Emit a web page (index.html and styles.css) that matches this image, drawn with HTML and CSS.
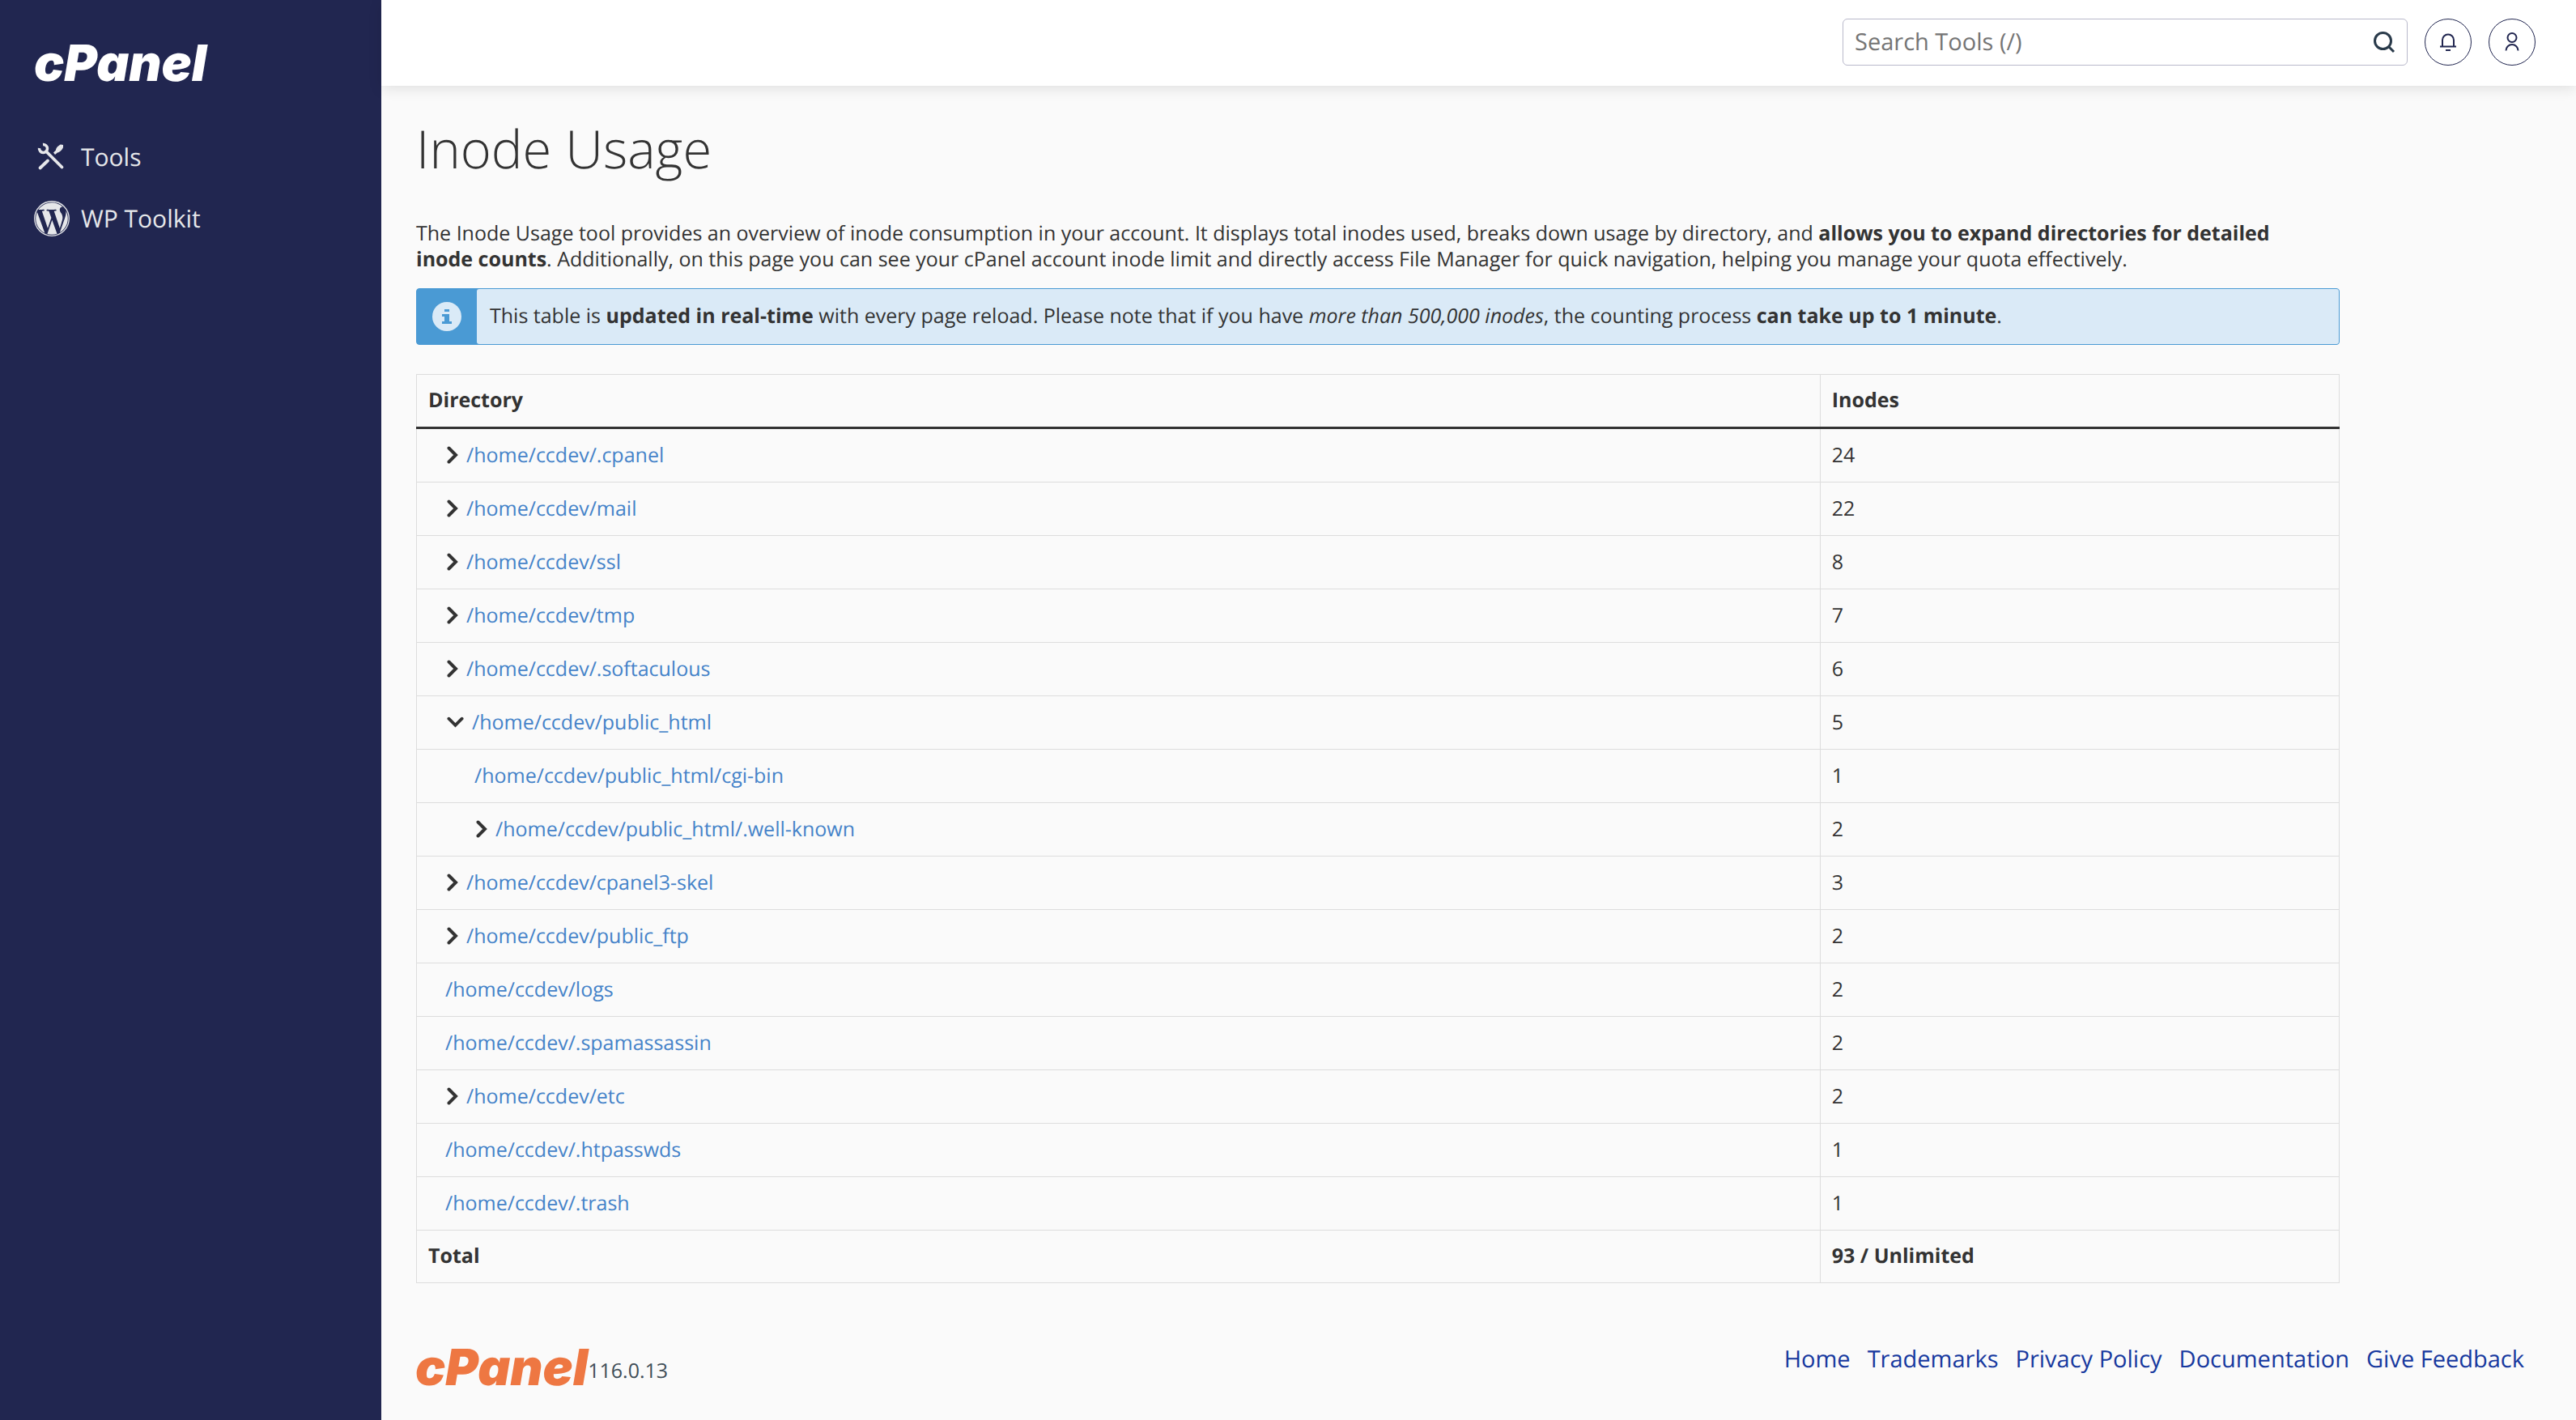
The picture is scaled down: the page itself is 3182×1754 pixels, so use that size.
FILE: index.html
```html
<!DOCTYPE html>
<html lang="en">
<head>
<meta charset="utf-8">
<title>cPanel - Inode Usage</title>
<link rel="stylesheet" href="styles.css">
</head>
<body>
<svg class="sprite" aria-hidden="true">
  <symbol id="chevron-right" viewBox="0 0 14 22"><path d="M2.5 2.5 11 11l-8.500 8.500" fill="none" stroke="currentColor" stroke-width="4" stroke-linecap="round" stroke-linejoin="miter"/></symbol>
  <symbol id="chevron-down" viewBox="0 0 22 14"><path d="M2.500 2.500 11 11l8.500-8.500" fill="none" stroke="currentColor" stroke-width="4" stroke-linecap="round" stroke-linejoin="miter"/></symbol>
</svg>

<aside class="sidebar">
  <a class="logo" href="#">cPanel</a>
  <nav class="side-nav" aria-label="Main">
    <a class="side-link" href="#">
      <svg class="side-icon" viewBox="0 0 44 44" aria-hidden="true">
        <path d="M11 6.500a5 5 0 1 1-4.500 4.500" fill="none" stroke="currentColor" stroke-width="3.500"/>
        <path d="M15 15 34.500 34.500M17 26.500 7.500 35.500" fill="none" stroke="currentColor" stroke-width="3.800" stroke-linecap="round"/>
        <path d="M24 16.500l3-3c0-3 4-6.500 6-7l3 .500v3c-.500 2-3.500 6-7 6.500l-3 2.500z" fill="currentColor"/>
      </svg>
      <span>Tools</span>
    </a>
    <a class="side-link" href="#">
      <svg class="side-icon" viewBox="0 0 24 24" aria-hidden="true"><circle cx="12" cy="12" r="11.600" fill="none" stroke="currentColor" stroke-width=".7"/><path fill="currentColor" d="M21.469 6.825c.84 1.537 1.318 3.300 1.318 5.175 0 3.979-2.156 7.456-5.363 9.325l3.295-9.527c.615-1.540.82-2.771.82-3.864 0-.405-.026-.780-.070-1.110m-7.981.105c.647-.030 1.232-.105 1.232-.105.582-.075.514-.930-.067-.899 0 0-1.755.135-2.880.135-1.064 0-2.850-.150-2.850-.150-.585-.030-.661.855-.075.885 0 0 .540.061 1.125.090l1.680 4.605-2.370 7.080L5.354 6.900c.649-.030 1.234-.100 1.234-.100.585-.075.516-.930-.065-.896 0 0-1.746.138-2.874.138-.200 0-.438-.008-.690-.015C4.911 3.150 8.235 1.215 12 1.215c2.809 0 5.365 1.072 7.286 2.833-.046-.003-.091-.009-.141-.009-1.060 0-1.812.923-1.812 1.914 0 .890.513 1.643 1.060 2.531.411.720.890 1.643.890 2.977 0 .915-.354 1.994-.821 3.479l-1.075 3.585-3.900-11.610.001.014zM12 22.784c-1.059 0-2.081-.153-3.048-.437l3.237-9.406 3.315 9.087c.024.053.050.101.078.149-1.120.393-2.325.609-3.582.609M1.211 12c0-1.564.336-3.050.935-4.390L7.290 21.709C3.694 19.960 1.212 16.271 1.211 12"/></svg>
      <span>WP Toolkit</span>
    </a>
  </nav>
</aside>

<div class="page">
  <header class="topbar">
    <form class="search" role="search">
      <input class="search-input" type="search" placeholder="Search Tools (/)" aria-label="Search Tools">
      <button class="search-button" type="button" aria-label="Search">
        <svg class="search-icon" viewBox="0 0 28 28" aria-hidden="true"><circle cx="12.500" cy="12.500" r="10" fill="none" stroke="currentColor" stroke-width="3"/><path d="M19.500 19.500 26 26" stroke="currentColor" stroke-width="3"/></svg>
      </button>
    </form>
    <button class="round-button" type="button" aria-label="Notifications">
      <svg class="round-icon" viewBox="0 0 24 24" aria-hidden="true"><path d="M2 17.500h20M5 17.500V9.500a7 7 0 0 1 14 0v8M9 22h6" fill="none" stroke="currentColor" stroke-width="2"/></svg>
    </button>
    <button class="round-button" type="button" aria-label="Account">
      <svg class="round-icon" viewBox="0 0 24 24" aria-hidden="true"><circle cx="12" cy="6.500" r="5.500" fill="none" stroke="currentColor" stroke-width="2"/><path d="M4.500 22.500a7.500 7.500 0 0 1 15 0" fill="none" stroke="currentColor" stroke-width="2"/></svg>
    </button>
  </header>

  <main class="content">
    <h1 class="title">Inode Usage</h1>
    <p class="intro">The Inode Usage tool provides an overview of inode consumption in your account. It displays total inodes used, breaks down usage by directory, and <b>allows you to expand directories for detailed inode counts</b>. Additionally, on this page you can see your cPanel account inode limit and directly access File Manager for quick navigation, helping you manage your quota effectively.</p>
    <div class="notice">
      <div class="notice-badge">
        <svg class="notice-icon" viewBox="0 0 36 36" aria-hidden="true"><circle cx="18" cy="18" r="18" fill="#daeaf7"/><path d="M15 9h6v3h-6zM12 15h9v9h3v3H12v-3h3v-6h-3z" fill="#4a9ad4"/></svg>
      </div>
      <p class="notice-text">This table is <b>updated in real-time</b> with every page reload. Please note that if you have <i>more than 500,000 inodes</i>, the counting process <b>can take up to 1 minute</b>.</p>
    </div>

    <table class="inodes">
      <thead>
        <tr><th class="col-dir" scope="col">Directory</th><th scope="col">Inodes</th></tr>
      </thead>
      <tbody>
        <tr><td><div class="entry"><button class="toggle" type="button" aria-label="Expand"><svg class="chev-right" aria-hidden="true"><use href="#chevron-right"/></svg></button><a href="#">/home/ccdev/.cpanel</a></div></td><td>24</td></tr>
        <tr><td><div class="entry"><button class="toggle" type="button" aria-label="Expand"><svg class="chev-right" aria-hidden="true"><use href="#chevron-right"/></svg></button><a href="#">/home/ccdev/mail</a></div></td><td>22</td></tr>
        <tr><td><div class="entry"><button class="toggle" type="button" aria-label="Expand"><svg class="chev-right" aria-hidden="true"><use href="#chevron-right"/></svg></button><a href="#">/home/ccdev/ssl</a></div></td><td>8</td></tr>
        <tr><td><div class="entry"><button class="toggle" type="button" aria-label="Expand"><svg class="chev-right" aria-hidden="true"><use href="#chevron-right"/></svg></button><a href="#">/home/ccdev/tmp</a></div></td><td>7</td></tr>
        <tr><td><div class="entry"><button class="toggle" type="button" aria-label="Expand"><svg class="chev-right" aria-hidden="true"><use href="#chevron-right"/></svg></button><a href="#">/home/ccdev/.softaculous</a></div></td><td>6</td></tr>
        <tr><td><div class="entry"><button class="toggle" type="button" aria-label="Collapse"><svg class="chev-down" aria-hidden="true"><use href="#chevron-down"/></svg></button><a href="#">/home/ccdev/public_html</a></div></td><td>5</td></tr>
        <tr><td><div class="entry nested"><a href="#">/home/ccdev/public_html/cgi-bin</a></div></td><td>1</td></tr>
        <tr><td><div class="entry nested"><button class="toggle" type="button" aria-label="Expand"><svg class="chev-right" aria-hidden="true"><use href="#chevron-right"/></svg></button><a href="#">/home/ccdev/public_html/.well-known</a></div></td><td>2</td></tr>
        <tr><td><div class="entry"><button class="toggle" type="button" aria-label="Expand"><svg class="chev-right" aria-hidden="true"><use href="#chevron-right"/></svg></button><a href="#">/home/ccdev/cpanel3-skel</a></div></td><td>3</td></tr>
        <tr><td><div class="entry"><button class="toggle" type="button" aria-label="Expand"><svg class="chev-right" aria-hidden="true"><use href="#chevron-right"/></svg></button><a href="#">/home/ccdev/public_ftp</a></div></td><td>2</td></tr>
        <tr><td><div class="entry"><a href="#">/home/ccdev/logs</a></div></td><td>2</td></tr>
        <tr><td><div class="entry"><a href="#">/home/ccdev/.spamassassin</a></div></td><td>2</td></tr>
        <tr><td><div class="entry"><button class="toggle" type="button" aria-label="Expand"><svg class="chev-right" aria-hidden="true"><use href="#chevron-right"/></svg></button><a href="#">/home/ccdev/etc</a></div></td><td>2</td></tr>
        <tr><td><div class="entry"><a href="#">/home/ccdev/.htpasswds</a></div></td><td>1</td></tr>
        <tr><td><div class="entry"><a href="#">/home/ccdev/.trash</a></div></td><td>1</td></tr>
      </tbody>
      <tfoot>
        <tr><th scope="row">Total</th><td>93 / Unlimited</td></tr>
      </tfoot>
    </table>
  </main>

  <footer class="footer">
    <div class="brand"><a class="logo logo-orange" href="#">cPanel</a><span class="version">116.0.13</span></div>
    <nav class="footer-nav" aria-label="Footer">
      <a href="#">Home</a><a href="#">Trademarks</a><a href="#">Privacy Policy</a><a href="#">Documentation</a><a href="#">Give Feedback</a>
    </nav>
  </footer>
</div>
</body>
</html>
```

FILE: styles.css
```css
* { box-sizing: border-box; }

body {
  margin: 0;
  min-height: 100vh;
  display: flex;
  background: #fafafa;
  color: #333;
  font: 25px/32px "Open Sans", sans-serif;
  text-rendering: geometricPrecision;
}

a { text-decoration: none; }
button { margin: 0; padding: 0; border: 0; background: none; color: inherit; font: inherit; }
.sprite { display: none; }

.logo {
  color: #fff;
  font: italic 900 62px/60px "Inter", sans-serif;
}
.logo-orange { color: #ee7742; }

.sidebar {
  flex: 0 0 471px;
  padding: 48px 42px;
  background: #212650;
}
.side-nav { display: flex; flex-direction: column; gap: 32px; margin-top: 64px; }
.side-link {
  display: flex;
  align-items: center;
  gap: 14px;
  color: #e6e7ea;
  font-size: 30px;
  line-height: 44px;
}
.side-icon { width: 44px; height: 44px; }

.page { flex: 1; min-width: 0; display: flex; flex-direction: column; }

.topbar {
  display: flex;
  justify-content: flex-end;
  gap: 21px;
  padding: 23px 50px 25px;
  background: #fff;
  box-shadow: 0 4px 16px rgba(0, 0, 0, 0.1);
}
.search {
  display: flex;
  flex: 0 1 698px;
  height: 58px;
  border: 1px solid #b9b9cb;
  border-radius: 6px;
}
.search-input {
  flex: 1;
  min-width: 0;
  padding: 0 14px;
  border: 0;
  background: none;
  font: 29px/40px "Open Sans", sans-serif;
  text-rendering: inherit;
}
.search-input::placeholder { color: #757575; }
.search-button { width: 56px; color: #293a4a; }
.search-icon { display: block; width: 28px; height: 28px; margin: 0 auto; }
.round-button {
  display: flex;
  align-items: center;
  justify-content: center;
  width: 58px;
  height: 58px;
  border: 1px solid #212650;
  border-radius: 50%;
  color: #212650;
}
.round-icon { width: 24px; height: 24px; }

.content { padding: 34px 292px 0 43px; }
.title { margin: 0 0 44px; font-size: 65px; line-height: 88px; font-weight: 300; }
.intro { margin: 0 0 20px; padding-right: 24px; }

.notice {
  display: flex;
  margin-bottom: 36px;
  border: 1px solid #4a9ad4;
  border-radius: 4px;
  background: #4a9ad4;
}
.notice-badge { display: flex; align-items: center; justify-content: center; width: 74px; }
.notice-icon { width: 36px; height: 36px; }
.notice-text { flex: 1; margin: 0; padding: 17px 16px 19px; border-radius: 3px; background: #daeaf7; }

.inodes { width: 100%; border-collapse: collapse; }
.inodes th, .inodes td {
  padding: 15px 14px 17px;
  border: 1px solid #ddd;
  text-align: left;
}
.inodes th, .inodes tfoot td { font-weight: 700; }
.inodes thead th { border-bottom: 3px solid #333; }
.col-dir { width: 73%; }
.entry { display: flex; align-items: center; min-height: 33px; padding-left: 21px; }
.entry a { color: #4583c9; }
.nested { padding-left: 57px; }
.toggle { display: flex; align-items: center; height: 33px; padding: 0 10px 0 2px; }
.chev-right { width: 14px; height: 22px; }
.chev-down { width: 21px; height: 14px; }

.footer {
  display: flex;
  justify-content: space-between;
  align-items: flex-start;
  padding: 74px 64px 40px 42px;
}
.brand { display: flex; align-items: flex-end; }
.version { padding-bottom: 10px; color: #3f4d57; }
.footer-nav { display: flex; gap: 21px; font-size: 29px; line-height: 40px; }
.footer-nav a { color: #17399f; }
```
